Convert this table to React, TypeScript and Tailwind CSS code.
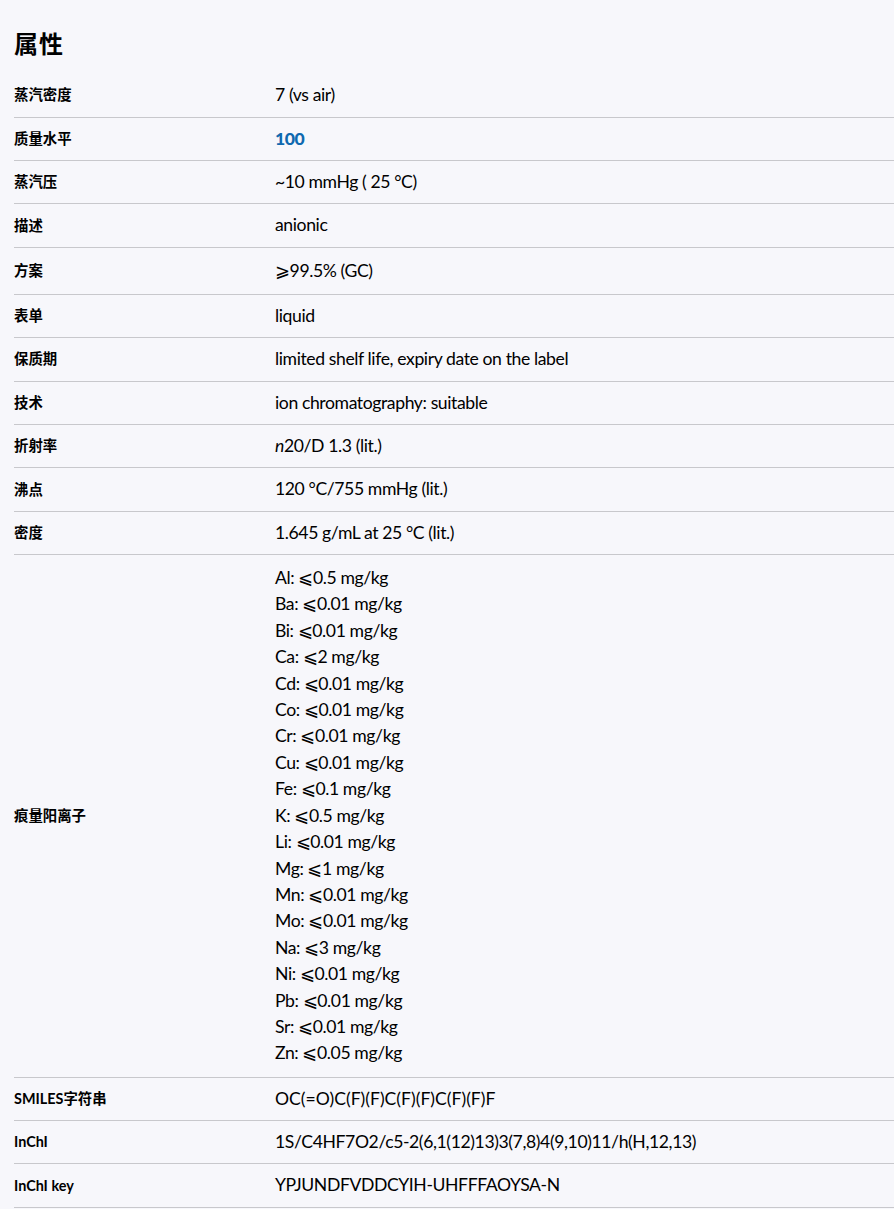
const traceCations = [
  "Al: ⩽0.5 mg/kg",
  "Ba: ⩽0.01 mg/kg",
  "Bi: ⩽0.01 mg/kg",
  "Ca: ⩽2 mg/kg",
  "Cd: ⩽0.01 mg/kg",
  "Co: ⩽0.01 mg/kg",
  "Cr: ⩽0.01 mg/kg",
  "Cu: ⩽0.01 mg/kg",
  "Fe: ⩽0.1 mg/kg",
  "K: ⩽0.5 mg/kg",
  "Li: ⩽0.01 mg/kg",
  "Mg: ⩽1 mg/kg",
  "Mn: ⩽0.01 mg/kg",
  "Mo: ⩽0.01 mg/kg",
  "Na: ⩽3 mg/kg",
  "Ni: ⩽0.01 mg/kg",
  "Pb: ⩽0.01 mg/kg",
  "Sr: ⩽0.01 mg/kg",
  "Zn: ⩽0.05 mg/kg",
];

type Row = {
  label: string;
  value: React.ReactNode;
  tall?: boolean;
  wide?: boolean;
};

const rows: Row[] = [
  { label: "蒸汽密度", value: "7 (vs air)" },
  {
    label: "质量水平",
    value: <span className="font-black text-[#0f69af]">100</span>,
  },
  { label: "蒸汽压", value: "~10 mmHg ( 25 °C)" },
  { label: "描述", value: "anionic" },
  { label: "方案", value: "⩾99.5% (GC)", tall: true },
  { label: "表单", value: "liquid" },
  { label: "保质期", value: "limited shelf life, expiry date on the label" },
  { label: "技术", value: "ion chromatography: suitable" },
  {
    label: "折射率",
    value: (
      <>
        <i>n</i>20/D 1.3 (lit.)
      </>
    ),
  },
  { label: "沸点", value: "120 °C/755 mmHg (lit.)" },
  { label: "密度", value: "1.645 g/mL at 25 °C (lit.)" },
  {
    label: "痕量阳离子",
    tall: true,
    value: (
      <>
        {traceCations.map((c) => (
          <div key={c}>{c}</div>
        ))}
      </>
    ),
  },
  {
    label: "SMILES字符串",
    value: "OC(=O)C(F)(F)C(F)(F)C(F)(F)F",
    wide: true,
  },
  {
    label: "InChI",
    value: "1S/C4HF7O2/c5-2(6,1(12)13)3(7,8)4(9,10)11/h(H,12,13)",
  },
  { label: "InChI key", value: "YPJUNDFVDDCYIH-UHFFFAOYSA-N" },
];

export default function App() {
  return (
    <div
      className="min-h-[1209px] bg-[#f7f7fb] pl-[14px] pt-[26px] text-black"
      style={{ fontFamily: "Lato, 'Noto Sans CJK SC', sans-serif" }}
    >
      {/* Title */}
      <h2 className="text-[24px] font-bold leading-[36px] tracking-[1px]">属性</h2>

      {/* Property table */}
      <div className="mt-[12.2px]">
        {rows.map((row) => (
          <div
            key={row.label}
            className={`flex items-center border-b border-[#c8c8cc] ${
              row.tall ? "py-[9.8px]" : "py-[8px]"
            }`}
          >
            <div className="w-[261px] shrink-0 text-[14.4px] font-bold leading-6">
              {row.label}
            </div>
            <div
              className={`text-[17.6px] leading-[26.4px] ${
                row.wide ? "tracking-[0px]" : "tracking-[-0.4px]"
              }`}
            >
              {row.value}
            </div>
          </div>
        ))}
      </div>
    </div>
  );
}
